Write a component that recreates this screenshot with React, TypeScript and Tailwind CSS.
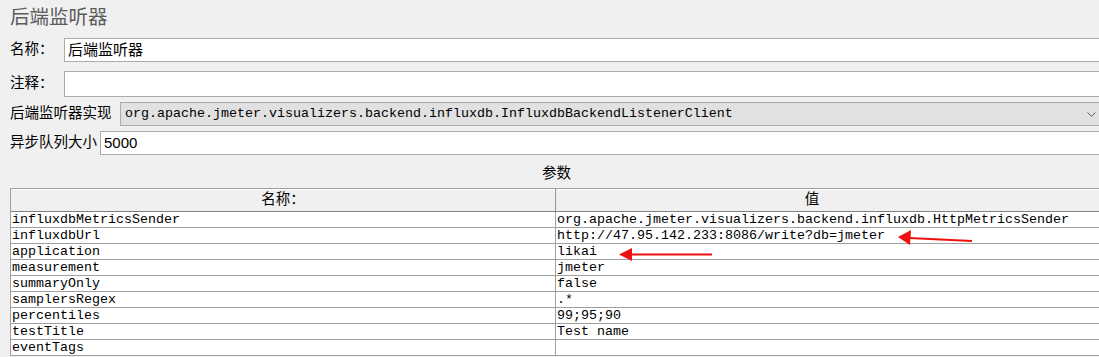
import React from 'react';

const mono = "font-['Liberation_Mono','Noto_Sans_CJK_SC',monospace]";

const params: [string, string][] = [
  ['influxdbMetricsSender', 'org.apache.jmeter.visualizers.backend.influxdb.HttpMetricsSender'],
  ['influxdbUrl', 'http://47.95.142.233:8086/write?db=jmeter'],
  ['application', 'likai'],
  ['measurement', 'jmeter'],
  ['summaryOnly', 'false'],
  ['samplersRegex', '.*'],
  ['percentiles', '99;95;90'],
  ['testTitle', 'Test name'],
  ['eventTags', ''],
];

function Field({ label, width, value, className }: { label: string; width: string; value?: string; className?: string }) {
  return (
    <div className={`flex items-stretch pl-[10px] ${className ?? ''}`}>
      <div className={`${width} shrink-0 flex items-center text-[14.5px] text-black`}>{label}</div>
      <div className="flex-1 flex items-center bg-white border-y border-l border-[#ababab] pl-[3px] text-[15px] text-black">
        {value}
      </div>
    </div>
  );
}

export default function App() {
  return (
    <div className="relative w-[1099px] h-[357px] overflow-hidden bg-[#f0f0f0] font-['Liberation_Sans','Noto_Sans_CJK_SC',sans-serif]">
      {/* Title */}
      <div className="h-[38px] pl-[10px] pt-[5px] text-[19.5px] leading-[24px] text-[#5c5c5c]">后端监听器</div>

      <Field label="名称：" width="w-[54px]" value="后端监听器" className="h-[24px]" />
      <Field label="注释：" width="w-[54px]" className="h-[26px] mt-[9px]" />

      {/* Implementation select */}
      <div className="flex items-stretch pl-[10px] h-[24px] mt-[5px]">
        <div className="w-[110px] shrink-0 flex items-center text-[14.5px] text-black">后端监听器实现</div>
        <div className="flex-1 flex items-center justify-between bg-[#e1e1e1] border-y border-l border-[#ababab] pl-[4px] pr-[3px]">
          <span className={`${mono} text-[13.33px] text-black`}>
            org.apache.jmeter.visualizers.backend.influxdb.InfluxdbBackendListenerClient
          </span>
          <svg width="9" height="6" viewBox="0 0 9 6" className="mt-[2px]">
            <path d="M0.5 0.5 L4.5 4.5 L8.5 0.5" fill="none" stroke="#606060" strokeWidth="1" />
          </svg>
        </div>
      </div>

      <Field label="异步队列大小" width="w-[90px]" value="5000" className="h-[24px] mt-[5px]" />

      {/* Parameters caption */}
      <div className="h-[33px] pt-[10px] pl-[14px] text-center text-[14.5px] leading-[16px] text-black">参数</div>

      {/* Parameters table */}
      <div className={`ml-[10px] border-t border-l border-[#a0a0a0] ${mono} text-[13.33px] text-black`}>
        <div className="grid grid-cols-[545px_1fr] h-[23px] bg-[#f0f0f0] border-b border-[#808080] shadow-[inset_0_1px_0_#ffffff]">
          <div className="flex items-center justify-center border-r border-[#9a9a9a] font-['Liberation_Sans','Noto_Sans_CJK_SC',sans-serif] text-[14.5px]">
            名称：
          </div>
          <div className="flex items-center justify-center pr-[32px] border-l border-[#e8e8e8] font-['Liberation_Sans','Noto_Sans_CJK_SC',sans-serif] text-[14.5px]">
            值
          </div>
        </div>
        {params.map(([name, value]) => (
          <div key={name} className="grid grid-cols-[545px_1fr] h-[16px] bg-white border-b border-[#a0a0a0] leading-[15px]">
            <div className="pl-[1px] border-r border-[#a0a0a0] whitespace-nowrap overflow-hidden">{name}</div>
            <div className="pl-[1px] whitespace-nowrap overflow-hidden">{value}</div>
          </div>
        ))}
      </div>

      {/* Red annotation arrows */}
      <svg className="absolute left-0 top-0 pointer-events-none" width="1099" height="357">
        <line x1="909" y1="238" x2="972" y2="241" stroke="#f01010" strokeWidth="2.2" />
        <polygon points="898,237 911,230 910,245" fill="#f01010" />
        <line x1="630" y1="254.5" x2="712" y2="254.5" stroke="#f01010" strokeWidth="2.2" />
        <polygon points="619,254.5 632,248 632,261" fill="#f01010" />
      </svg>
    </div>
  );
}
